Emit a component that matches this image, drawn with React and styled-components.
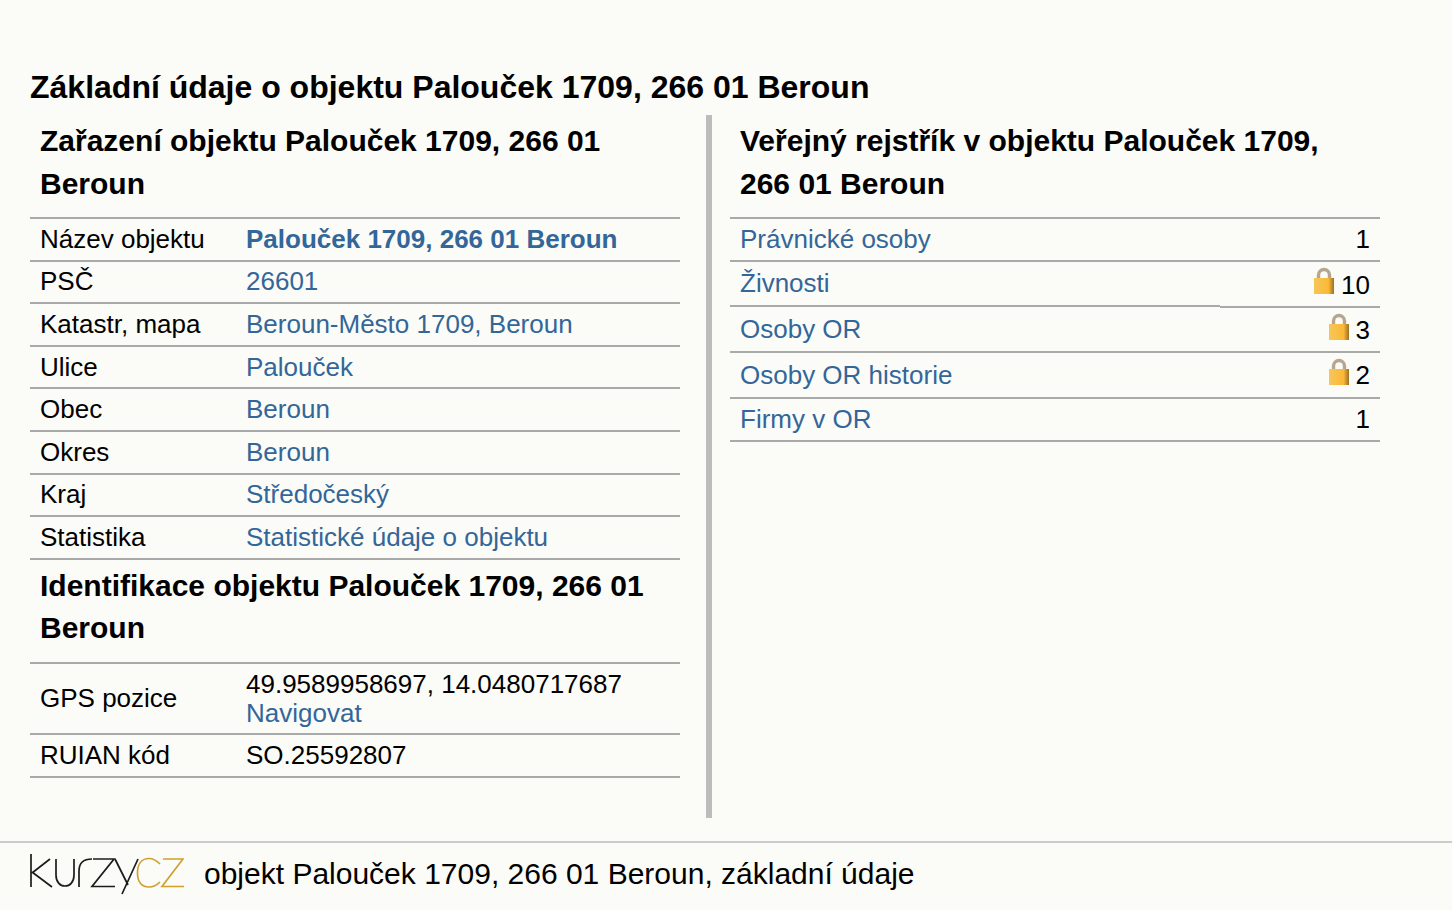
import React from 'react';
import styled, { createGlobalStyle } from 'styled-components';

const GlobalStyle = createGlobalStyle`
  html, body {
    margin: 0;
    padding: 0;
    background: #fbfbf7;
    color: #000;
    font-family: 'Liberation Sans', Arial, sans-serif;
  }
`;

const Page = styled.div`
  width: 1452px;
  height: 910px;
  display: flex;
  flex-direction: column;
  overflow: hidden;
`;
const Main = styled.main`
  height: 841px;
  padding: 66px 0 0 30px;
  box-sizing: border-box;
`;
const Title = styled.h1`
  margin: 0;
  font-size: 32px;
  line-height: 42px;
  font-weight: bold;
`;
const Columns = styled.div`
  display: flex;
  height: 703px;
  margin-top: 7px;
`;
const LeftColumn = styled.section`
  width: 650px;
  margin-right: 26px;
`;
const Divider = styled.div`
  width: 6px;
  background: #bcbcbc;
`;
const RightColumn = styled.section`
  width: 650px;
  margin-left: 18px;
`;
const SectionTitle = styled.h2`
  margin: 0;
  padding: 5px 10px 12px;
  font-size: 30px;
  line-height: 42.5px;
  font-weight: bold;
  border-bottom: 2px solid #a9a9a9;
`;
const Row = styled.div`
  display: flex;
  box-sizing: border-box;
  height: ${(p) => p.$height || 42.6}px;
  align-items: center;
  padding: 0 10px;
  font-size: 26px;
  line-height: 29px;
  border-bottom: 2px solid #a9a9a9;
`;
const Label = styled.div`
  width: 206px;
  flex: none;
`;
const Value = styled.div`
  flex: 1;
  padding-top: ${(p) => p.$nudge || 0}px;
`;
const Link = styled.a`
  color: #336699;
  font-weight: ${(p) => (p.$strong ? 'bold' : 'normal')};
  text-decoration: none;
`;
const RegisterRow = styled.div`
  display: flex;
  height: ${(p) => p.$height}px;
  font-size: 26px;
  line-height: 29px;
`;
const NameCell = styled.div`
  width: 490px;
  box-sizing: border-box;
  display: flex;
  align-items: center;
  padding-left: 10px;
  margin-bottom: ${(p) => (p.$step ? 1 : 0)}px;
  border-bottom: 2px solid #a9a9a9;
`;
const CountCell = styled.div`
  flex: 1;
  box-sizing: border-box;
  display: flex;
  align-items: center;
  justify-content: flex-end;
  padding-right: 10px;
  border-bottom: 2px solid #a9a9a9;
`;
const Count = styled.span`
  padding-top: ${(p) => p.$drop || 0}px;
`;
const Lock = styled.svg`
  width: 22px;
  height: 28px;
  margin: -6px 6px 0 0;
`;
const Footer = styled.footer`
  height: 69px;
  box-sizing: border-box;
  border-top: 2px solid #cccccc;
  padding: 0 0 6px 30px;
  display: flex;
  align-items: center;
`;
const Logo = styled.svg`
  width: 154px;
  height: 44px;
  flex: none;
  margin-right: 20px;
`;
const FooterText = styled.div`
  font-size: 30px;
`;

const place = 'Palouček 1709, 266 01 Beroun';

const classRows = [
  ['PSČ', '26601'],
  ['Katastr, mapa', 'Beroun-Město 1709, Beroun'],
  ['Ulice', 'Palouček'],
  ['Obec', 'Beroun'],
  ['Okres', 'Beroun'],
  ['Kraj', 'Středočeský'],
  ['Statistika', 'Statistické údaje o objektu'],
];

const registerRows = [
  { name: 'Právnické osoby', count: 1, height: 43 },
  { name: 'Živnosti', count: 10, locked: true, height: 46, drop: 3, step: true },
  { name: 'Osoby OR', count: 3, locked: true, height: 45, drop: 2 },
  { name: 'Osoby OR historie', count: 2, locked: true, height: 46 },
  { name: 'Firmy v OR', count: 1, height: 43 },
];

const LockIcon = () => (
  <Lock viewBox="0 0 22 28">
    <defs>
      <linearGradient id="lockBody" x1="0" x2="1" y1="0" y2="0">
        <stop offset="0" stopColor="#f6c65a" />
        <stop offset="0.72" stopColor="#fbb935" />
        <stop offset="1" stopColor="#9a7028" />
      </linearGradient>
    </defs>
    <path d="M5.5 13V8a5.5 5.5 0 0 1 11 0V13" fill="none" stroke="#b5a68f" strokeWidth="3.4" />
    <rect x="1" y="11" width="20" height="16" fill="url(#lockBody)" />
  </Lock>
);

const KurzyLogo = () => (
  <Logo viewBox="30 851 154 44">
    <g fill="none" stroke="#1c1c1c" strokeWidth="1.7">
      <path d="M31 853V886M32 872L50 858M32 871L52 886" />
      <path d="M56 858V874c0 7 4 11 9 11s9-4 9-11V858" />
      <path d="M79 886V870c0-8 5-12 13-12" />
      <path d="M93 858H114L92 885.5H115" />
      <path d="M115 858L128 884M138 858L122 893" />
    </g>
    <g fill="none" stroke="#d0a02e" strokeWidth="1.7">
      <path d="M160 863C156 859 152 857.5 149 857.5C141 857.5 137.5 864 137.5 872C137.5 880 141 886 149 886C152 886 156 885 160 881" />
      <path d="M163 858H183L162 885.5H184" />
    </g>
  </Logo>
);

export default function App() {
  return (
    <Page>
      <GlobalStyle />
      <Main>
        <Title>{`Základní údaje o objektu ${place}`}</Title>
        <Columns>
          <LeftColumn>
            <SectionTitle>{`Zařazení objektu ${place}`}</SectionTitle>
            <Row>
              <Label>Název objektu</Label>
              <Value><Link href="#" $strong>{place}</Link></Value>
            </Row>
            {classRows.map(([label, value]) => (
              <Row key={label}>
                <Label>{label}</Label>
                <Value><Link href="#">{value}</Link></Value>
              </Row>
            ))}
            <SectionTitle>{`Identifikace objektu ${place}`}</SectionTitle>
            <Row $height={71.4}>
              <Label>GPS pozice</Label>
              <Value $nudge={1}>
                49.9589958697, 14.0480717687
                <br />
                <Link href="#">Navigovat</Link>
              </Value>
            </Row>
            <Row>
              <Label>RUIAN kód</Label>
              <Value>SO.25592807</Value>
            </Row>
          </LeftColumn>
          <Divider />
          <RightColumn>
            <SectionTitle>{`Veřejný rejstřík v objektu ${place}`}</SectionTitle>
            {registerRows.map((row) => (
              <RegisterRow key={row.name} $height={row.height}>
                <NameCell $step={row.step}>
                  <Link href="#">{row.name}</Link>
                </NameCell>
                <CountCell>
                  {row.locked && <LockIcon />}
                  <Count $drop={row.drop}>{row.count}</Count>
                </CountCell>
              </RegisterRow>
            ))}
          </RightColumn>
        </Columns>
      </Main>
      <Footer>
        <KurzyLogo />
        <FooterText>{`objekt ${place}, základní údaje`}</FooterText>
      </Footer>
    </Page>
  );
}
